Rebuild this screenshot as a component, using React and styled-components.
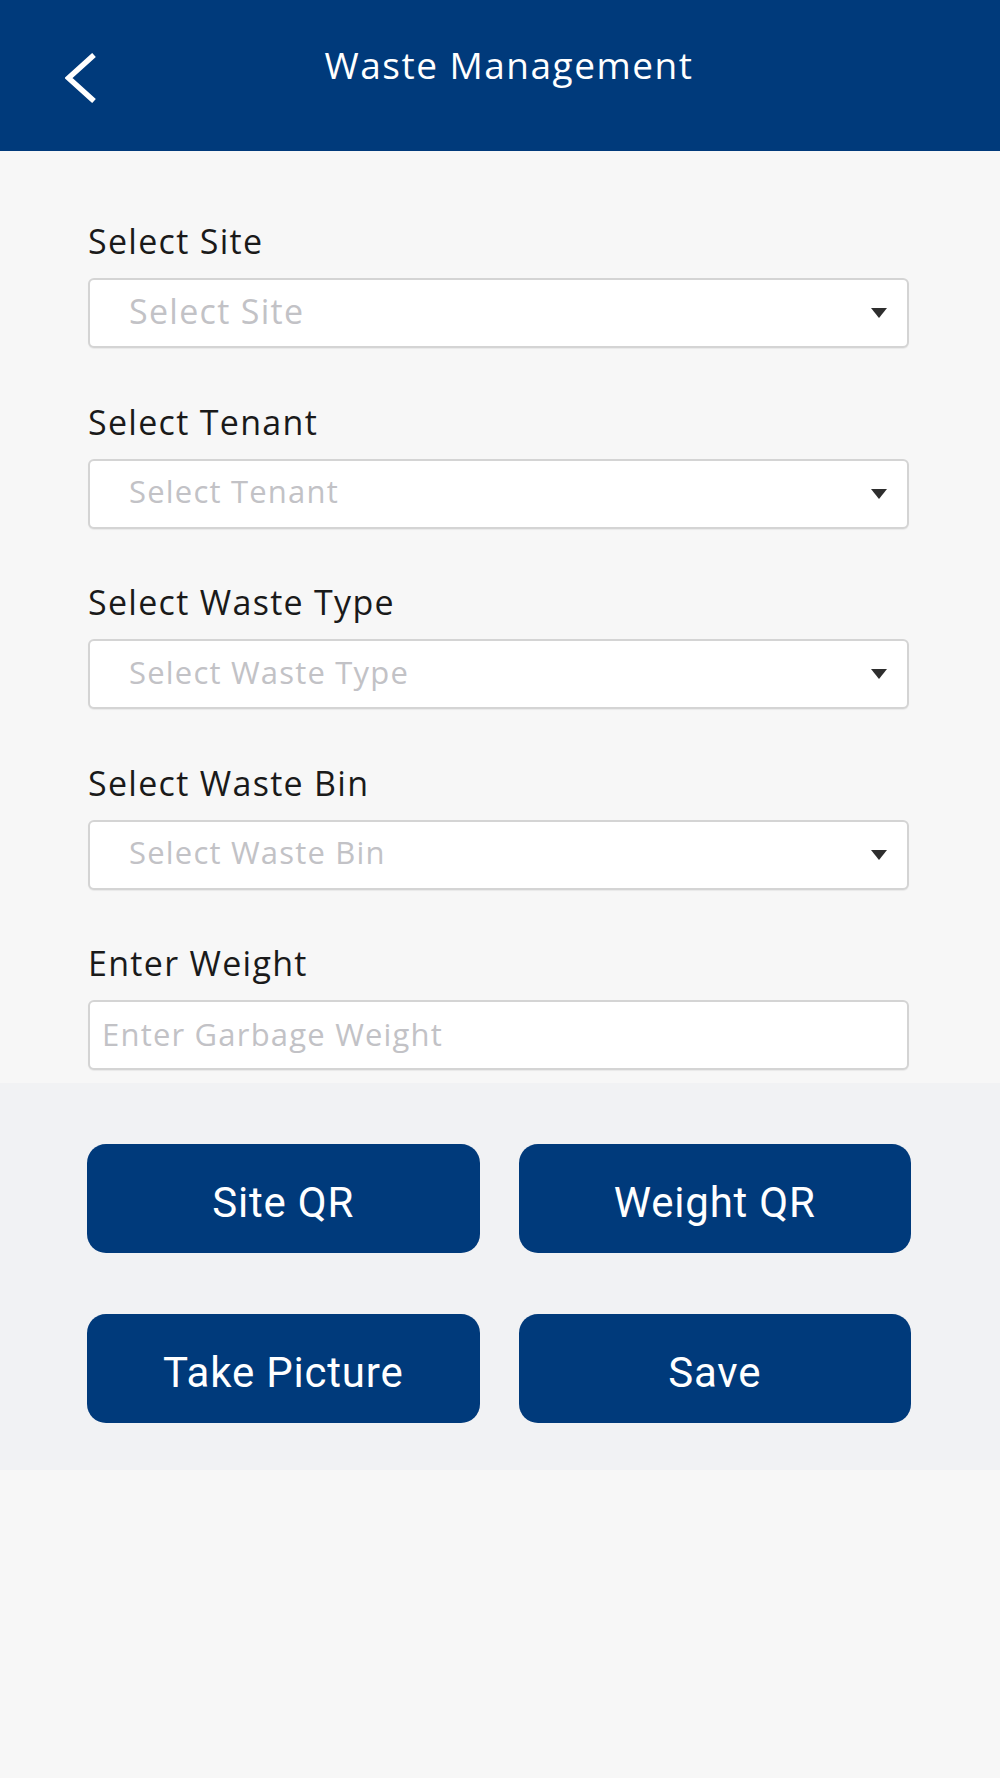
import React from "react";
import styled, { createGlobalStyle } from "styled-components";

const GlobalStyle = createGlobalStyle`
  html, body {
    margin: 0;
    padding: 0;
    background: #f7f7f7;
  }
  body {
    font-family: "Open Sans", "Liberation Sans", sans-serif;
  }
  * { box-sizing: border-box; }
`;

const Page = styled.div`
  min-height: 1778px;
  background: #f7f7f7;
  display: flex;
  flex-direction: column;
`;

const Header = styled.header`
  height: 151px;
  background: #003a7b;
  display: grid;
  grid-template-columns: 1fr auto 1fr;
  align-items: start;
  padding-top: 46px;
`;

const BackButton = styled.button`
  justify-self: start;
  margin: 7px 0 0 65px;
  padding: 0;
  border: 0;
  background: transparent;
  width: 31px;
  height: 50px;
  display: flex;
  cursor: pointer;
`;

const Title = styled.h1`
  margin: 0 0 0 18px;
  font-family: "Open Sans", sans-serif;
  font-weight: 400;
  font-size: 37px;
  line-height: 37px;
  letter-spacing: 1.5px;
  color: #ffffff;
  white-space: nowrap;
`;

const Form = styled.section`
  display: flex;
  flex-direction: column;
  gap: 56.5px;
  padding: 73px 91px 13px 88px;
`;

const Field = styled.div`
  display: flex;
  flex-direction: column;
  gap: 20px;
`;

const Label = styled.label`
  font-family: "Open Sans", sans-serif;
  font-size: 34px;
  line-height: 34px;
  letter-spacing: 1.3px;
  color: #1a1a1a;
  white-space: nowrap;
`;

const SelectBox = styled.div`
  height: 70px;
  background: #ffffff;
  border: 2px solid #d4d4d4;
  border-radius: 6px;
  box-shadow: 0 1px 1px rgba(0, 0, 0, 0.06);
  display: flex;
  align-items: center;
  justify-content: space-between;
  padding: 0 20px 4px 39px;
`;

const Placeholder = styled.span`
  font-family: "Open Sans", sans-serif;
  font-size: ${(p) => (p.$large ? "34px" : "31px")};
  line-height: 1;
  letter-spacing: ${(p) => (p.$large ? "1.3px" : "1.2px")};
  color: #c2c2c6;
  white-space: nowrap;
`;

const Caret = styled.span`
  width: 0;
  height: 0;
  margin-top: 4px;
  border-left: 8px solid transparent;
  border-right: 8px solid transparent;
  border-top: 10px solid #2e2e2e;
`;

const TextInput = styled.input`
  height: 70px;
  width: 100%;
  background: #ffffff;
  border: 2px solid #d4d4d4;
  border-radius: 6px;
  box-shadow: 0 1px 1px rgba(0, 0, 0, 0.06);
  padding: 0 12px 2px 12px;
  font-family: "Open Sans", sans-serif;
  font-size: 31px;
  letter-spacing: 1.2px;
  color: #222;
  outline: none;
  &::placeholder {
    color: #c2c2c6;
  }
`;

const Actions = styled.section`
  background: #f1f2f4;
  display: grid;
  grid-template-columns: 1fr 1fr;
  column-gap: 39px;
  row-gap: 61px;
  padding: 61px 89px 47px 87px;
`;

const ActionButton = styled.button`
  height: 109px;
  border: 0;
  border-radius: 19px;
  background: #003a7b;
  color: #ffffff;
  font-family: Roboto, "Liberation Sans", sans-serif;
  font-size: 42px;
  line-height: 42px;
  letter-spacing: 0.8px;
  font-weight: 400;
  padding: 9px 0 0 0;
  cursor: pointer;
`;

const Filler = styled.div`
  flex: 1;
  background: #f7f7f7;
`;

const ChevronIcon = () => (
  <svg width="31" height="50" viewBox="0 0 31 50" fill="none">
    <polyline
      points="29,2 3.5,25 29,48"
      stroke="#ffffff"
      strokeWidth="5.5"
      strokeLinejoin="miter"
      strokeLinecap="butt"
    />
  </svg>
);

const selects = [
  { label: "Select Site", placeholder: "Select Site", large: true },
  { label: "Select Tenant", placeholder: "Select Tenant" },
  { label: "Select Waste Type", placeholder: "Select Waste Type" },
  { label: "Select Waste Bin", placeholder: "Select Waste Bin" },
];

const buttons = ["Site QR", "Weight QR", "Take Picture", "Save"];

export default function App() {
  return (
    <>
      <GlobalStyle />
      <Page>
        <Header>
          <BackButton aria-label="Back">
            <ChevronIcon />
          </BackButton>
          <Title>Waste Management</Title>
          <div />
        </Header>
        <Form>
          {selects.map((s) => (
            <Field key={s.label}>
              <Label>{s.label}</Label>
              <SelectBox role="combobox">
                <Placeholder $large={s.large}>{s.placeholder}</Placeholder>
                <Caret />
              </SelectBox>
            </Field>
          ))}
          <Field>
            <Label>Enter Weight</Label>
            <TextInput placeholder="Enter Garbage Weight" />
          </Field>
        </Form>
        <Actions>
          {buttons.map((b) => (
            <ActionButton key={b}>{b}</ActionButton>
          ))}
        </Actions>
        <Filler />
      </Page>
    </>
  );
}
